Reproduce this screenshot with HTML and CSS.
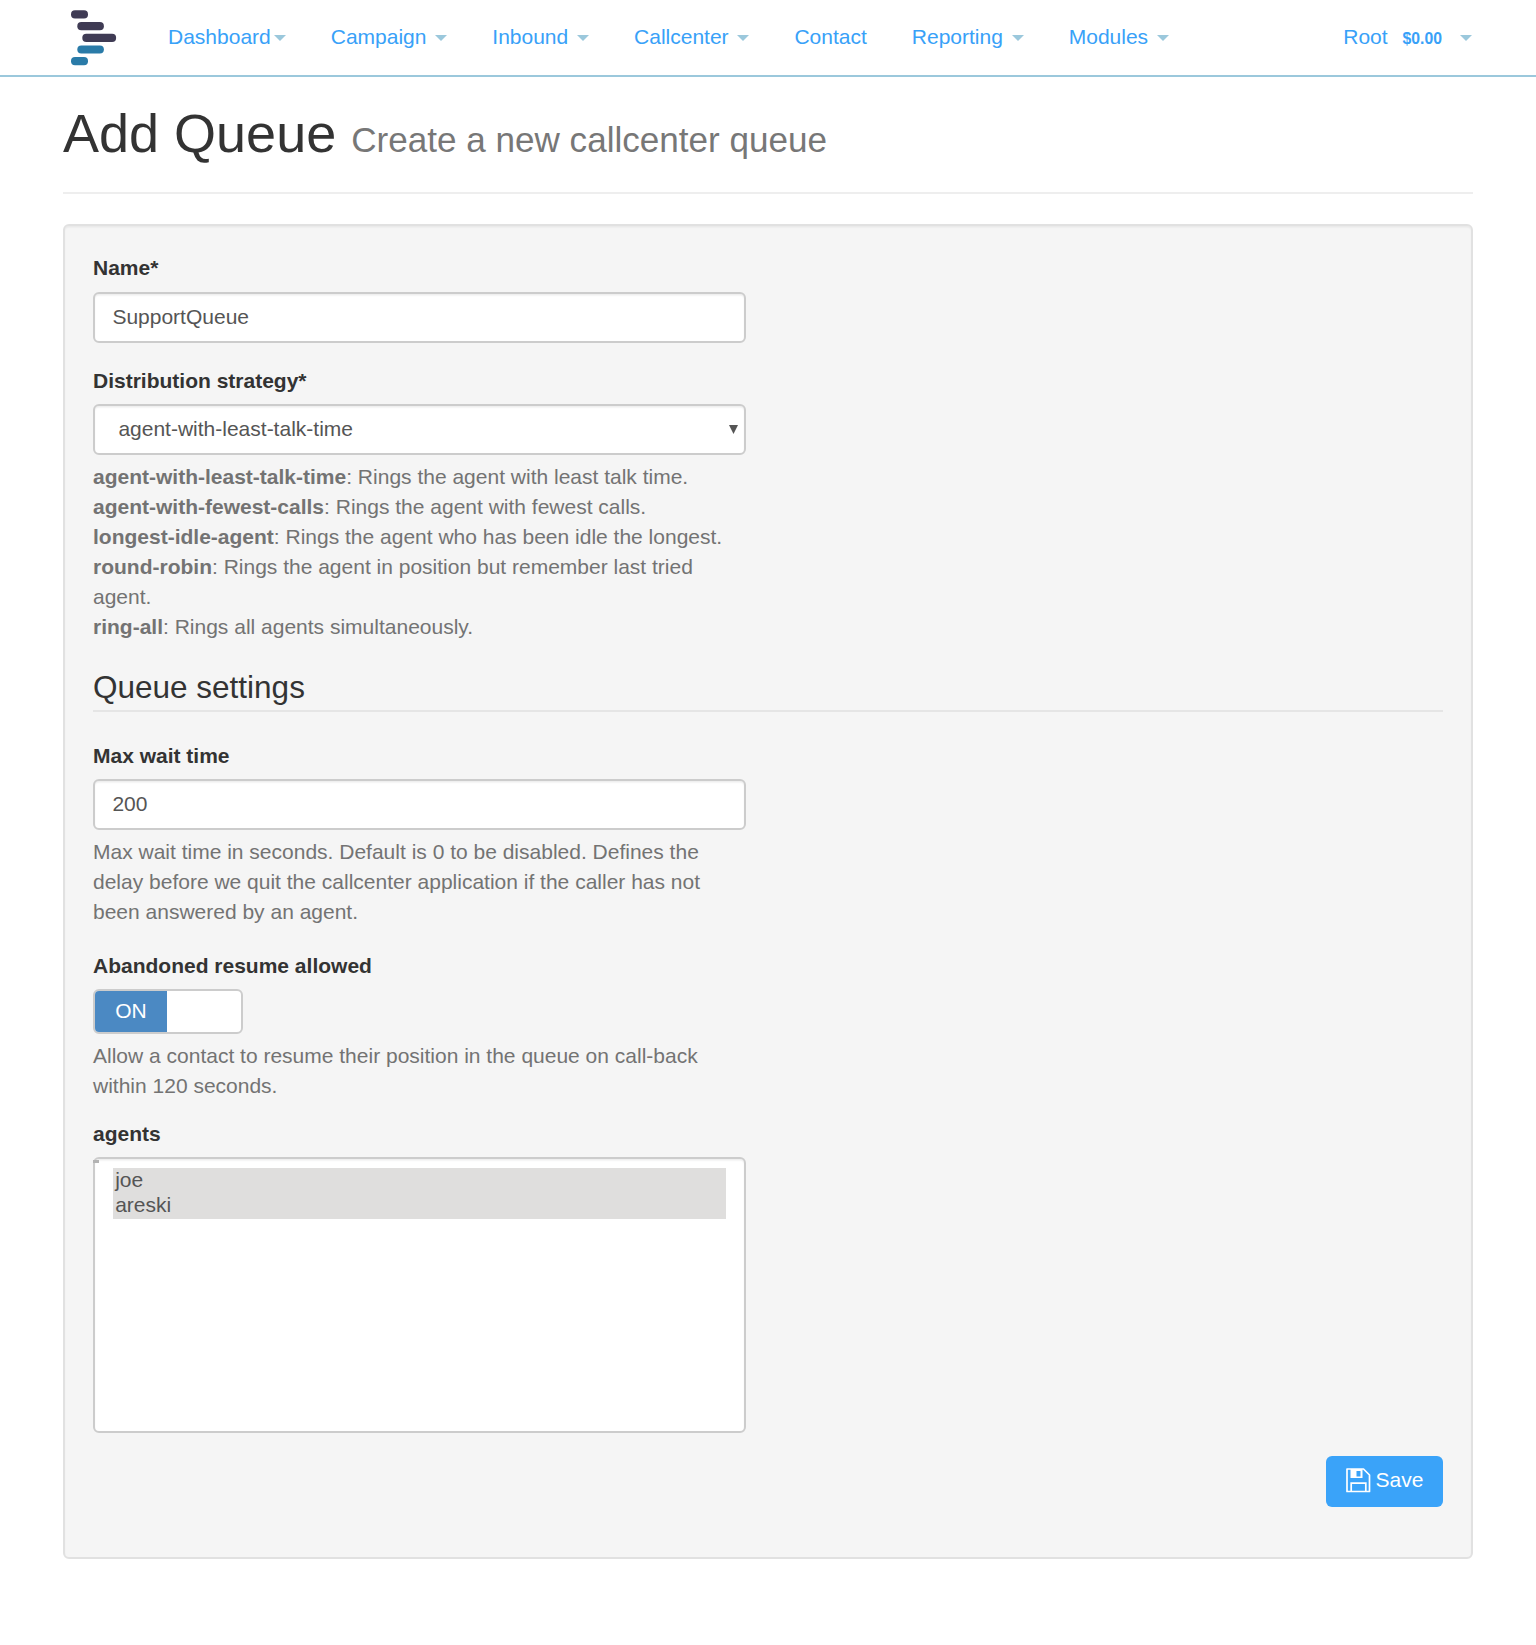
FILE: index.html
```html
<!DOCTYPE html>
<html lang="en">
<head>
<meta charset="utf-8">
<title>Add Queue</title>
<link rel="stylesheet" href="styles.css">
</head>
<body>
<nav class="navbar">
  <svg class="logo" width="46" height="56" viewBox="0 0 46 56" aria-hidden="true">
    <g fill="#3f3b54">
      <rect x="0" y="0.3" width="17" height="8.2" rx="4"/>
      <rect x="6.3" y="12" width="26.6" height="8.2" rx="4"/>
      <rect x="11.3" y="23.7" width="33.8" height="8.2" rx="4"/>
    </g>
    <g fill="#2a7ba8">
      <rect x="6.3" y="35.4" width="26.6" height="8.2" rx="4"/>
      <rect x="0" y="47" width="17" height="8.2" rx="4"/>
    </g>
  </svg>
  <ul class="menu">
    <li>Dashboard<b class="caret"></b></li>
    <li>Campaign <b class="caret"></b></li>
    <li>Inbound <b class="caret"></b></li>
    <li>Callcenter <b class="caret"></b></li>
    <li>Contact</li>
    <li>Reporting <b class="caret"></b></li>
    <li>Modules <b class="caret"></b></li>
  </ul>
  <div class="account">
    <span>Root</span>
    <span class="balance">$0.00</span>
    <b class="caret"></b>
  </div>
</nav>
<main class="container">
  <h1 class="page-title">Add Queue <small>Create a new callcenter queue</small></h1>
  <form class="well">
    <div class="field field-name">
      <label for="name">Name*</label>
      <input class="control" id="name" type="text" value="SupportQueue">
    </div>
    <div class="field field-strategy">
      <label for="strategy">Distribution strategy*</label>
      <div class="select-wrap">
        <select class="control" id="strategy"><option>agent-with-least-talk-time</option></select>
        <svg class="arrow" width="9" height="9" viewBox="0 0 9 9" aria-hidden="true"><path d="M0 0H9L4.5 9Z" fill="#555"/></svg>
      </div>
      <p class="help"><strong>agent-with-least-talk-time</strong>: Rings the agent with least talk time.<br>
      <strong>agent-with-fewest-calls</strong>: Rings the agent with fewest calls.<br>
      <strong>longest-idle-agent</strong>: Rings the agent who has been idle the longest.<br>
      <strong>round-robin</strong>: Rings the agent in position but remember last tried<br>agent.<br>
      <strong>ring-all</strong>: Rings all agents simultaneously.</p>
    </div>
    <h2 class="legend">Queue settings</h2>
    <div class="field field-wait">
      <label for="wait">Max wait time</label>
      <input class="control" id="wait" type="text" value="200">
      <p class="help">Max wait time in seconds. Default is 0 to be disabled. Defines the<br>delay before we quit the callcenter application if the caller has not<br>been answered by an agent.</p>
    </div>
    <div class="field field-resume">
      <label>Abandoned resume allowed</label>
      <div class="switch"><span class="switch-on">ON</span></div>
      <p class="help">Allow a contact to resume their position in the queue on call-back<br>within 120 seconds.</p>
    </div>
    <div class="field field-agents">
      <label>agents</label>
      <ul class="listbox">
        <li>joe</li>
        <li>areski</li>
      </ul>
    </div>
    <div class="actions">
      <button class="save" type="button">
        <svg width="25" height="25" viewBox="0 0 25 25" aria-hidden="true">
          <path d="M1 1H17.5L23.5 7V23.5H1Z" fill="none" stroke="#fff" stroke-width="1.7" stroke-linejoin="round"/>
          <path d="M4.5 1H16.5V10H4.5ZM10.5 3V8.5H14.5V3Z" fill="#fff" fill-rule="evenodd"/>
          <path d="M5.2 23.5V15.2H19.8V23.5" fill="none" stroke="#fff" stroke-width="1.7"/>
        </svg>
        <span>Save</span>
      </button>
    </div>
  </form>
</main>
</body>
</html>
```
FILE: styles.css
```css
* { box-sizing: border-box; }

body {
  margin: 0;
  background: #fff;
  color: #333;
  font: 21px/30px "Liberation Sans", Arial, sans-serif;
}

ul { margin: 0; padding: 0; list-style: none; }

.navbar {
  display: flex;
  height: 77px;
  padding: 0 64px 0 70.5px;
  border-bottom: 2px solid #9bc8dc;
  color: #38a1f8;
}
.logo { margin-top: 10px; margin-right: 51.5px; flex: none; }
.menu { display: flex; gap: 45px; padding-top: 22px; }
.menu li { white-space: nowrap; }
.caret {
  display: inline-block;
  margin-left: 3px;
  border: 6px solid transparent;
  border-top-color: #9bc8dc;
  border-bottom: 0;
  vertical-align: middle;
}
.account { display: flex; margin-left: auto; padding-top: 22px; }
.balance { margin-left: 15px; font-size: 15.75px; font-weight: bold; line-height: 33px; }
.account .caret { margin: 13px 0 0 18px; align-self: flex-start; }

.container { width: 1410px; margin: 0 auto; }
.page-title {
  height: 117px;
  margin: 0 0 30px;
  padding-top: 26px;
  border-bottom: 2px solid #eee;
  font-size: 54px;
  line-height: 60px;
  font-weight: normal;
}
.page-title small { color: #777; font-size: 35.1px; line-height: 1; }

.well {
  height: 1335px;
  padding: 27px 28px;
  border: 2px solid #e1e1e1;
  border-radius: 6px;
  background: #f5f5f5;
  box-shadow: inset 0 1.5px 1.5px rgba(0, 0, 0, .05);
}
.field { width: 653px; }
.field label { display: block; margin-bottom: 8px; font-weight: bold; }
.field-name label { margin-bottom: 9px; }
.field-strategy { margin-top: 23px; }
.field-wait { margin-top: 29px; }
.field-resume { margin-top: 24px; }
.field-agents { margin-top: 18px; }

.control {
  display: block;
  width: 100%;
  height: 51px;
  margin: 0;
  padding: 7px 17.4px 9px;
  border: 2px solid #ccc;
  border-radius: 6px;
  background: #fff;
  color: #555;
  font: inherit;
  appearance: none;
  box-shadow: inset 0 1.5px 1.5px rgba(0, 0, 0, .075);
}
select.control { padding-left: 23.4px; }
.select-wrap { position: relative; }
.arrow { position: absolute; right: 8px; top: 21px; }
.help { margin: 7px 0 0; color: #737373; white-space: nowrap; }

.legend {
  height: 45px;
  margin: 25px 0 0;
  border-bottom: 2px solid #e5e5e5;
  font-size: 31.5px;
  font-weight: normal;
  line-height: 40px;
}

.switch {
  width: 150px;
  height: 45px;
  border: 2px solid #ccc;
  border-radius: 6px;
  background: #fff;
  overflow: hidden;
}
.switch-on {
  display: block;
  width: 72px;
  height: 41px;
  background: #4b89c3;
  color: #fff;
  line-height: 39px;
  text-align: center;
}

.listbox {
  position: relative;
  height: 276px;
  padding: 9px 18px;
  border: 2px solid #ccc;
  border-radius: 6px;
  background: #fff;
  color: #555;
  box-shadow: inset 0 1.5px 1.5px rgba(0, 0, 0, .075);
}
.listbox::before {
  content: "";
  position: absolute;
  left: -2px;
  top: 1px;
  width: 6px;
  height: 3px;
  background: #b3b3b3;
}
.listbox li { height: 25px; padding-left: 2.2px; background: #dfdedd; line-height: 24px; }
.listbox li:last-child { height: 26px; }

.actions { display: flex; justify-content: flex-end; margin-top: 23px; }
.save {
  display: flex;
  width: 117px;
  height: 51px;
  padding: 12px 0 0 19.5px;
  gap: 5px;
  border: 0;
  border-radius: 6px;
  background: #3aa3f9;
  color: #fff;
  font: inherit;
  line-height: 24px;
  align-items: flex-start;
}
.save svg { flex: none; }
```
